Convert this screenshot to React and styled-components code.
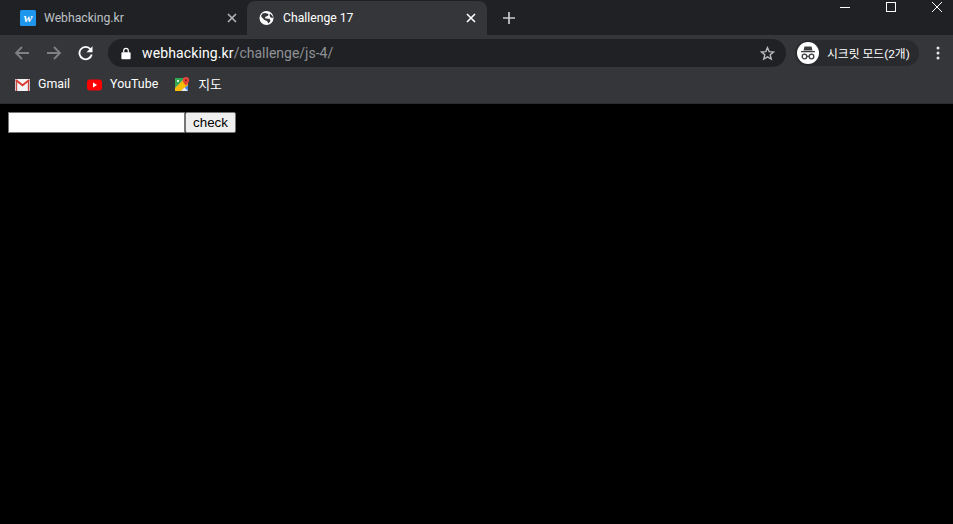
import React from 'react';
import styled, {createGlobalStyle} from 'styled-components';

const Global = createGlobalStyle`
    html, body {
        margin: 0;
        height: 100%;
        background: #000;
        overflow: hidden;
    }
    #root {
        height: 100%;
    }
`;

const Page = styled.div`
    display: flex;
    flex-direction: column;
    height: 524px;
    font-family: Roboto, "Noto Sans CJK KR", sans-serif;
`;

const TabStrip = styled.div`
    display: flex;
    align-items: flex-start;
    height: 35px;
    padding-left: 8px;
    background: #202124;
    position: relative;
    z-index: 2;
`;

const Tab = styled.div`
    display: flex;
    align-items: center;
    box-sizing: border-box;
    width: ${(p) => (p.$active ? '240px' : '239px')};
    height: ${(p) => (p.$active ? '37px' : '35px')};
    margin-top: ${(p) => (p.$active ? '1px' : '0')};
    padding: ${(p) => (p.$active ? '0 11px 3px 12px' : '0 10px 0 12px')};
    border-radius: 8px 8px 0 0;
    background: ${(p) => (p.$active ? '#35363a' : 'transparent')};
    color: ${(p) => (p.$active ? '#fff' : '#bdc1c6')};
    font-size: 12.2px;
`;

const TabIcon = styled.div`
    flex: none;
    width: 16px;
    height: 16px;
    margin-right: 8px;
`;

const Favicon = styled(TabIcon)`
    display: flex;
    align-items: center;
    justify-content: center;
    border-radius: 1.5px;
    background: #1e96ec;
    color: #fff;
    font: italic bold 13px/16px "Liberation Serif", serif;
`;

const TabTitle = styled.span`
    flex: 1;
    white-space: nowrap;
`;

const NewTab = styled.svg`
    flex: none;
    margin: 11px 0 0 15px;
`;

const WindowControls = styled.div`
    display: flex;
    margin-left: auto;
    padding-right: 11px;
`;

const WindowButton = styled.svg`
    display: block;
    margin-left: 36px;
`;

const Toolbar = styled.div`
    display: flex;
    align-items: center;
    height: 35px;
    padding: 0 8px 0 14px;
    box-sizing: border-box;
    background: #35363a;
`;

const NavButton = styled.svg`
    flex: none;
    margin-right: ${(p) => p.$gap}px;
`;

const Omnibox = styled.div`
    display: flex;
    align-items: center;
    flex: none;
    box-sizing: border-box;
    width: 678px;
    height: 28px;
    margin-top: 1px;
    padding: 0 11px 0 13px;
    border-radius: 14px;
    background: #202124;
    font-size: 14px;
`;

const Host = styled.span`
    color: #fff;
    margin-left: 11px;
    letter-spacing: 0.12px;
`;

const UrlPath = styled.span`
    flex: 1;
    color: #8f9296;
`;

const ProfilePill = styled.div`
    display: flex;
    align-items: center;
    flex: none;
    box-sizing: border-box;
    width: 124px;
    height: 26px;
    margin-left: 9px;
    padding-left: 2px;
    border-radius: 13px;
    background: #292a2d;
    color: #fff;
    font-size: 11.8px;
    white-space: nowrap;
`;

const ProfileAvatar = styled.div`
    display: flex;
    align-items: center;
    justify-content: center;
    flex: none;
    width: 22px;
    height: 22px;
    margin-right: 8px;
    border-radius: 50%;
    background: #fff;
`;

const MenuDots = styled.svg`
    flex: none;
    margin-left: 17px;
`;

const BookmarkBar = styled.div`
    display: flex;
    align-items: center;
    height: 34px;
    padding: 0 0 4px 15px;
    box-sizing: border-box;
    background: #35363a;
    border-bottom: 1px solid #2b2c2f;
`;

const Bookmark = styled.div`
    display: flex;
    align-items: center;
    margin-right: ${(p) => p.$gap}px;
    color: #fff;
    font-size: ${(p) => p.$size || 12.4}px;
`;

const BookmarkIcon = styled.svg`
    flex: none;
    margin-right: 8px;
`;

const BookmarkLabel = styled.span`
    padding-bottom: 2px;
`;

const Content = styled.main`
    flex: 1;
    display: flex;
    align-items: flex-start;
    padding: 8px;
    background: #000;
`;

const Input = styled.input`
    box-sizing: border-box;
    width: 177px;
    height: 21px;
    margin: 0;
    padding: 1px 2px;
    border: 1px solid #767676;
    background: #fff;
`;

const CheckButton = styled.button`
    box-sizing: border-box;
    width: 51px;
    height: 21px;
    margin: 0;
    padding: 0;
    border: 1px solid #767676;
    border-radius: 2px;
    background: #efefef;
    color: #000;
    font: 13.33px "Liberation Sans", Arial, sans-serif;
`;

const CloseIcon = ({color}) => (
    <svg width="10" height="10" viewBox="0 0 10 10">
        <path d="M1 1l8 8M9 1l-8 8" stroke={color} strokeWidth="1.6" fill="none"/>
    </svg>
);

const App = () => (
    <Page>
        <Global/>
        <TabStrip>
            <Tab>
                <Favicon>w</Favicon>
                <TabTitle>Webhacking.kr</TabTitle>
                <CloseIcon color="#b4b6b9"/>
            </Tab>
            <Tab $active>
                <TabIcon>
                    <svg width="16" height="16" viewBox="0 0 16 16">
                        <circle cx="7.500" cy="8" r="7" fill="#fff"/>
                        <path d="M3.500 3.500l3-.5 3 1-.5 1.800-3 1.200.5 1.500 4 .3 1 2.200-2 2.500-1.500-2.500-2.500-1-2.500-2.500L2 6zM11 3.500l2.500 2.500.5 2-2.500-.5-1-2z" fill="#35363a"/>
                    </svg>
                </TabIcon>
                <TabTitle>Challenge 17</TabTitle>
                <CloseIcon color="#fff"/>
            </Tab>
            <NewTab width="14" height="14" viewBox="0 0 14 14">
                <path d="M7 1v12M1 7h12" stroke="#c8cacd" strokeWidth="1.700" fill="none"/>
            </NewTab>
            <WindowControls>
                <WindowButton width="10" height="12" viewBox="0 0 10 12">
                    <path d="M0 7.500h10" stroke="#fff" fill="none"/>
                </WindowButton>
                <WindowButton width="10" height="12" viewBox="0 0 10 12">
                    <rect x=".5" y="2.500" width="9" height="9" stroke="#fff" fill="none"/>
                </WindowButton>
                <WindowButton width="10" height="12" viewBox="0 0 10 12">
                    <path d="M0 2l10 10M10 2L0 12" stroke="#fff" fill="none"/>
                </WindowButton>
            </WindowControls>
        </TabStrip>
        <Toolbar>
            <NavButton $gap={18} width="15" height="16" viewBox="0 0 15 16">
                <path d="M15 8H2M8 2L2 8l6 6" stroke="#7e8083" strokeWidth="1.800" fill="none"/>
            </NavButton>
            <NavButton $gap={16} width="15" height="16" viewBox="0 0 15 16">
                <path d="M0 8h13M7 2l6 6-6 6" stroke="#7e8083" strokeWidth="1.800" fill="none"/>
            </NavButton>
            <NavButton $gap={15} width="15" height="16" viewBox="0 0 15 16">
                <path d="M12.500 4.200A6.200 6.200 0 1 0 13.700 9.500" stroke="#fff" strokeWidth="1.800" fill="none"/>
                <path d="M14.500 1.300v6h-6z" fill="#fff"/>
            </NavButton>
            <Omnibox>
                <svg width="10" height="13" viewBox="0 0 10 13">
                    <path d="M1.200 5.200h7.600a.8.800 0 0 1 .8.800v5.500a.8.800 0 0 1-.8.800H1.200a.8.800 0 0 1-.8-.8V6a.8.800 0 0 1 .8-.8z" fill="#fff"/>
                    <path d="M2.700 5.500V3.700a2.300 2.300 0 0 1 4.600 0v1.800" stroke="#fff" strokeWidth="1.200" fill="none"/>
                </svg>
                <Host>webhacking.kr</Host>
                <UrlPath>/challenge/js-4/</UrlPath>
                <svg width="15" height="15" viewBox="0 0 16 16">
                    <path d="M8 1.800l1.800 4.200 4.600.4-3.500 3 1.100 4.500L8 11.500l-4 2.400 1.100-4.500-3.500-3 4.600-.4z" stroke="#b9babc" strokeWidth="1.500" fill="none"/>
                </svg>
            </Omnibox>
            <ProfilePill>
                <ProfileAvatar>
                    <svg width="18" height="18" viewBox="0 0 18 18">
                        <path d="M5.500 2.500h7l1 4h-9zM2 7h14v1.300H2z" fill="#3c3d40"/>
                        <circle cx="5.500" cy="12.500" r="2.300" stroke="#3c3d40" strokeWidth="1.300" fill="none"/>
                        <circle cx="12.500" cy="12.500" r="2.300" stroke="#3c3d40" strokeWidth="1.300" fill="none"/>
                        <path d="M7.800 12.300h2.400" stroke="#3c3d40" strokeWidth="1.200"/>
                    </svg>
                </ProfileAvatar>
                시크릿 모드(2개)
            </ProfilePill>
            <MenuDots width="4" height="14" viewBox="0 0 4 14">
                <circle cx="2" cy="2" r="1.500" fill="#e8e8e8"/>
                <circle cx="2" cy="7" r="1.500" fill="#e8e8e8"/>
                <circle cx="2" cy="12" r="1.500" fill="#e8e8e8"/>
            </MenuDots>
        </Toolbar>
        <BookmarkBar>
            <Bookmark $gap={17}>
                <BookmarkIcon width="15" height="12" viewBox="0 0 15 12">
                    <rect width="15" height="12" rx="1" fill="#f4f4f4"/>
                    <path d="M1 1.500v10M14 1.500v10" stroke="#d8d8d8" strokeWidth="2"/>
                    <path d="M.8 1l6.700 5.300L14.200 1" stroke="#d93a2f" strokeWidth="1.800" fill="none"/>
                    <path d="M1.500 1.500V12M13.500 1.500V12" stroke="#c9473c" strokeWidth="1.300"/>
                </BookmarkIcon>
                <BookmarkLabel>Gmail</BookmarkLabel>
            </Bookmark>
            <Bookmark $gap={17}>
                <BookmarkIcon width="15" height="12" viewBox="0 0 15 12">
                    <rect width="15" height="11" y=".5" rx="3" fill="#f00"/>
                    <path d="M6 3.500L10 6 6 8.500z" fill="#fff"/>
                </BookmarkIcon>
                <BookmarkLabel>YouTube</BookmarkLabel>
            </Bookmark>
            <Bookmark $gap={0} $size={12.8}>
                <BookmarkIcon width="15" height="15" viewBox="0 0 15 15">
                    <rect y="1" width="13" height="13" fill="#4285f4"/>
                    <path d="M0 1h8v2L0 11z" fill="#35a853"/>
                    <path d="M2 3h2v2H2z" fill="#d7efe0"/>
                    <path d="M0 14v-3L8 3h2l3 3v2l-7 6z" fill="#fbbc04"/>
                    <path d="M6 14l3.500-3.500L13 14z" fill="#e8eaed"/>
                    <path d="M11 0a3.200 3.200 0 0 1 3.200 3.200C14.200 5.500 11 8.500 11 8.500S7.800 5.500 7.800 3.200A3.200 3.200 0 0 1 11 0z" fill="#e2453a"/>
                    <circle cx="11" cy="3.200" r="1" fill="#8c1c13"/>
                </BookmarkIcon>
                <BookmarkLabel>지도</BookmarkLabel>
            </Bookmark>
        </BookmarkBar>
        <Content>
            <Input type="text"/>
            <CheckButton>check</CheckButton>
        </Content>
    </Page>
);

export default App;
